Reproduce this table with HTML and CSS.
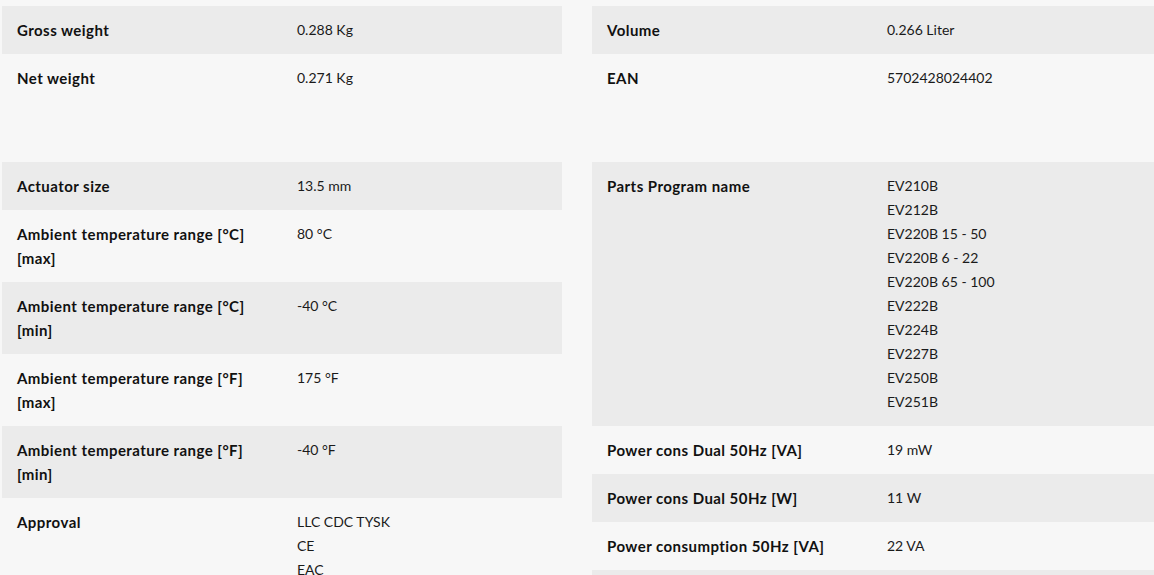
FILE: index.html
```html
<!DOCTYPE html>
<html lang="en">
<head>
<meta charset="utf-8">
<title>Specifications</title>
<link rel="stylesheet" href="styles.css">
</head>
<body>
<div class="specs">
  <div class="table">
    <div class="row"><div class="label">Gross weight</div><div class="value">0.288 Kg</div></div>
    <div class="row"><div class="label">Net weight</div><div class="value">0.271 Kg</div></div>
  </div>
  <div class="table">
    <div class="row"><div class="label">Volume</div><div class="value">0.266 Liter</div></div>
    <div class="row"><div class="label">EAN</div><div class="value">5702428024402</div></div>
  </div>
  <div class="table">
    <div class="row"><div class="label">Actuator size</div><div class="value">13.5 mm</div></div>
    <div class="row"><div class="label">Ambient temperature range [°C] [max]</div><div class="value">80 °C</div></div>
    <div class="row"><div class="label">Ambient temperature range [°C] [min]</div><div class="value">-40 °C</div></div>
    <div class="row"><div class="label">Ambient temperature range [°F] [max]</div><div class="value">175 °F</div></div>
    <div class="row"><div class="label">Ambient temperature range [°F] [min]</div><div class="value">-40 °F</div></div>
    <div class="row"><div class="label">Approval</div><div class="value">LLC CDC TYSK<br>CE<br>EAC</div></div>
  </div>
  <div class="table">
    <div class="row"><div class="label">Parts Program name</div><div class="value">EV210B<br>EV212B<br>EV220B 15 - 50<br>EV220B 6 - 22<br>EV220B 65 - 100<br>EV222B<br>EV224B<br>EV227B<br>EV250B<br>EV251B</div></div>
    <div class="row"><div class="label">Power cons Dual 50Hz [VA]</div><div class="value">19 mW</div></div>
    <div class="row"><div class="label">Power cons Dual 50Hz [W]</div><div class="value">11 W</div></div>
    <div class="row"><div class="label">Power consumption 50Hz [VA]</div><div class="value">22 VA</div></div>
    <div class="row"><div class="label">Power consumption 60Hz [VA]</div><div class="value">22 VA</div></div>
  </div>
</div>
</body>
</html>
```
FILE: styles.css
```css
html, body {
  margin: 0;
  padding: 0;
  background: #f7f7f7;
  overflow: hidden;
}
body {
  font-family: Lato, "Liberation Sans", sans-serif;
  font-size: 14px;
  line-height: 24px;
  color: #1a1a1a;
}
.specs {
  display: grid;
  grid-template-columns: 560px 562px;
  column-gap: 30px;
  row-gap: 60px;
  padding: 6px 0 0 2px;
  align-items: start;
}
.row {
  display: grid;
  grid-template-columns: 280px 1fr;
}
.row:nth-child(odd) {
  background: #ebebeb;
}
.label, .value {
  padding: 12px 15px;
}
.label {
  font-weight: 700;
  font-size: 15px;
  letter-spacing: 0.45px;
  color: #111;
}
```
